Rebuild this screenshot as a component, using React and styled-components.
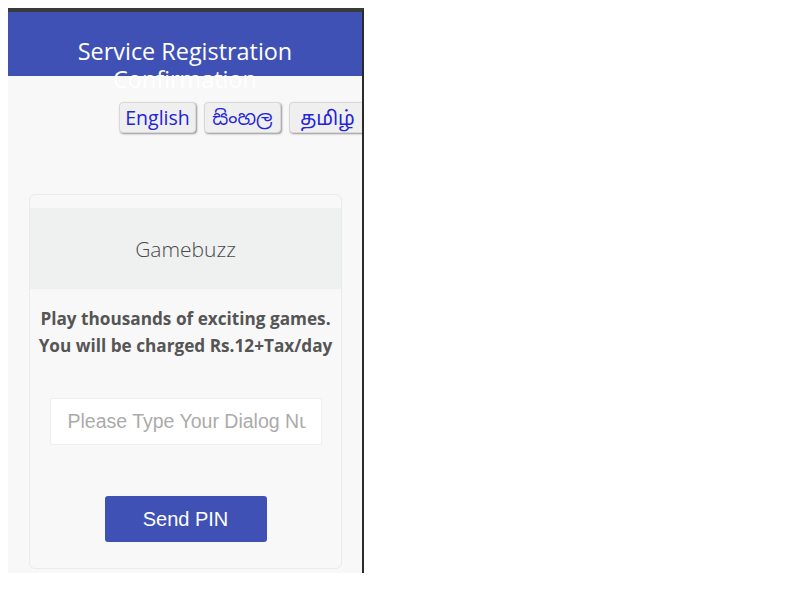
import React from "react";
import styled, { createGlobalStyle } from "styled-components";

const Global = createGlobalStyle`
  html, body { margin: 0; padding: 0; background: #fff; }
  body { padding: 8px; }
  * { box-sizing: border-box; }
`;

const Frame = styled.div`
  width: 356px;
  height: 565px;
  background: #f8f8f8;
  border-top: 4px solid #3a3a3a;
  border-right: 2px solid #2a2a2a;
  display: flex;
  flex-direction: column;
  overflow: hidden;
`;

const Header = styled.header`
  height: 64px;
  background: #3f51b5;
  flex: none;
`;

const Title = styled.h1`
  margin: 0;
  padding: 25px 38px 0;
  font-family: "Open Sans", "Noto Sans", sans-serif;
  font-weight: 400;
  font-size: 23.4px;
  line-height: 28px;
  color: #fff;
  text-align: center;
`;

const LangRow = styled.div`
  display: flex;
  justify-content: flex-end;
  gap: 8px;
  margin-top: 26px;
  margin-right: -4px;
`;

const LangButton = styled.button`
  height: 31px;
  width: ${(p) => p.$w}px;
  flex: none;
  padding: 0;
  background: #efefef;
  border: 1px solid #d8d8d8;
  border-radius: 4px;
  box-shadow: 1px 1px 2px rgba(0, 0, 0, 0.4);
  color: #2323d8;
  font-family: "Open Sans", "Noto Sans", "Noto Sans Sinhala", "Noto Sans Tamil", sans-serif;
  font-size: 19.5px;
  line-height: 29px;
`;

const Card = styled.section`
  margin: 61px 20px 0 21px;
  border: 1px solid #ebebeb;
  border-radius: 6px;
  padding: 13px 0 26px;
  background: #f8f8f8;
  display: flex;
  flex-direction: column;
  align-items: center;
`;

const CardHead = styled.div`
  align-self: stretch;
  height: 81px;
  background: #eff0f0;
  display: flex;
  align-items: center;
  justify-content: center;
  font-family: "Open Sans", "Noto Sans", sans-serif;
  font-weight: 300;
  font-size: 21px;
  color: #4a4a4a;
`;

const Desc = styled.p`
  margin: 16px -12px 0;
  font-family: "Open Sans", "Noto Sans", sans-serif;
  font-weight: 700;
  font-size: 17.2px;
  line-height: 27px;
  color: #555;
  text-align: center;
  white-space: nowrap;
`;

const NumberInput = styled.input`
  margin-top: 39px;
  width: 272px;
  height: 47px;
  border: 1px solid #efefef;
  border-radius: 2px;
  background: #fff;
  padding: 0 15px 0 17px;
  font-family: "Liberation Sans", Arial, sans-serif;
  font-size: 19.5px;
  outline: none;
  &::placeholder { color: #ababab; }
`;

const SendButton = styled.button`
  margin-top: 51px;
  width: 162px;
  height: 46px;
  border: none;
  border-radius: 3px;
  background: #3f51b5;
  color: #fff;
  font-family: "Liberation Sans", Arial, sans-serif;
  font-size: 20px;
`;

export default function App() {
  return (
    <>
      <Global />
      <Frame>
        <Header>
          <Title>Service Registration Confirmation</Title>
        </Header>
        <LangRow>
          <LangButton $w={77}>English</LangButton>
          <LangButton $w={77}>සිංහල</LangButton>
          <LangButton $w={77}>தமிழ்</LangButton>
        </LangRow>
        <Card>
          <CardHead>Gamebuzz</CardHead>
          <Desc>
            Play thousands of exciting games.
            <br />
            You will be charged Rs.12+Tax/day
          </Desc>
          <NumberInput placeholder="Please Type Your Dialog Number" />
          <SendButton>Send PIN</SendButton>
        </Card>
      </Frame>
    </>
  );
}
